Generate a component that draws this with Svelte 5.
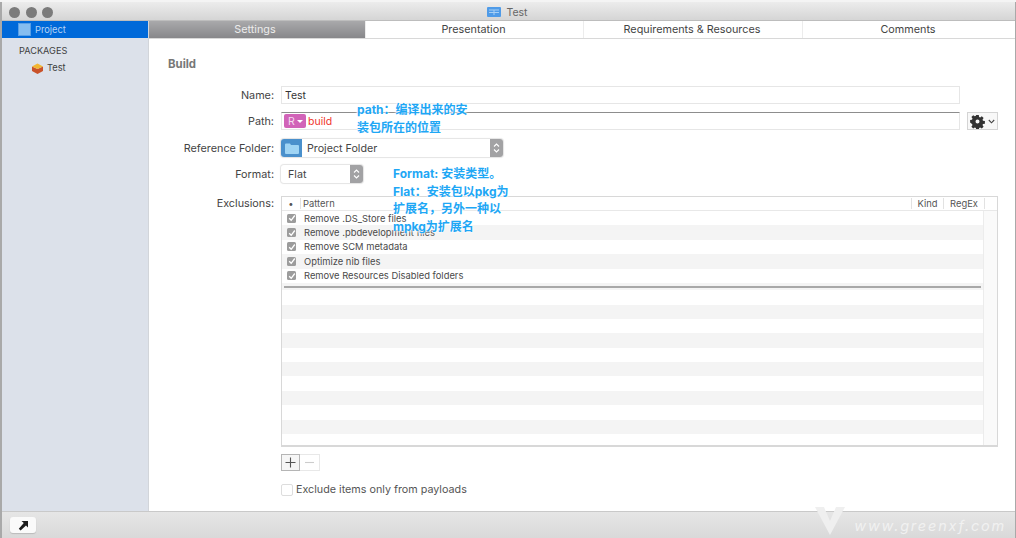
<script>
	const tabs = ['Settings', 'Presentation', 'Requirements & Resources', 'Comments'];
	const rules = [
		'Remove .DS_Store files',
		'Remove .pbdevelopment files',
		'Remove SCM metadata',
		'Optimize nib files',
		'Remove Resources Disabled folders'
	];
	const emptyRows = Array(11).fill(0);
</script>

<div class="window">
	<header class="titlebar">
		<div class="lights"><i></i><i></i><i></i></div>
		<div class="title">
			<svg width="14" height="10" viewBox="0 0 14 10"><rect width="14" height="10" rx="1" fill="#4f9be8" /><path d="M2 3h10M2 5.5h10M7 3v5" stroke="#a8d0f5" stroke-width="1" /></svg>
			<span>Test</span>
		</div>
	</header>

	<div class="body">
		<aside class="sidebar">
			<div class="project">
				<span class="project-icon"></span>
				<span>Project</span>
			</div>
			<div class="group-label">PACKAGES</div>
			<div class="package">
				<svg width="13" height="12" viewBox="0 0 13 12">
					<path d="M1 4.5 6.5 7 12 4.5V9l-5.5 3L1 9z" fill="#c9522a" />
					<path d="M1 4.5 6.5 1.5 12 4.5 6.5 7z" fill="#f2b632" />
				</svg>
				<span>Test</span>
			</div>
		</aside>

		<main class="content">
			<nav class="tabs">
				{#each tabs as tab, i}
					<div class="tab" class:active={i === 0}>{tab}</div>
				{/each}
			</nav>

			<div class="pane">
				<h2>Build</h2>
				<div class="form">
					<label for="name">Name:</label>
					<input id="name" class="field" value="Test" />

					<span class="label">Path:</span>
					<div class="path-row">
						<div class="field path-field">
							<span class="badge">R<b></b></span>
							<span class="path-text">build</span>
						</div>
						<div class="gear-btn">
							<svg width="15" height="15" viewBox="0 0 15 15">
								<path fill="#333" fill-rule="evenodd" d="M6.2 1h2.6l.3 1.9 1.1.5 1.6-1.1 1.8 1.8-1.1 1.6.5 1.1 1.9.3v2.6l-1.9.3-.5 1.1 1.1 1.6-1.8 1.8-1.6-1.1-1.1.5-.3 1.9H6.2l-.3-1.9-1.1-.5-1.6 1.1-1.8-1.8 1.1-1.6-.5-1.1L.1 8.6V6l1.9-.3.5-1.1-1.1-1.6 1.8-1.8 1.6 1.1 1.1-.5zM7.5 5.4a2 2 0 1 0 0 4 2 2 0 0 0 0-4z" />
							</svg>
							<svg width="7" height="5" viewBox="0 0 7 5"><path d="M.8 1 3.5 3.8 6.2 1" fill="none" stroke="#444" stroke-width="1.1" /></svg>
						</div>
					</div>

					<span class="label">Reference Folder:</span>
					<div class="select ref-select">
						<span class="folder-cell">
							<svg width="14" height="11" viewBox="0 0 14 11"><path d="M0 1.5A1 1 0 0 1 1 .5h4l1 1.5h7a1 1 0 0 1 1 1V10a1 1 0 0 1-1 1H1a1 1 0 0 1-1-1z" fill="#9fd4f4" /></svg>
						</span>
						<span class="select-text">Project Folder</span>
						<span class="stepper"><svg width="7" height="12" viewBox="0 0 7 12"><path d="M1 4.5 3.5 2 6 4.5M1 7.5 3.5 10 6 7.5" fill="none" stroke="#fff" stroke-width="1.1" /></svg></span>
					</div>

					<span class="label">Format:</span>
					<div class="select format-select">
						<span class="select-text">Flat</span>
						<span class="stepper"><svg width="7" height="12" viewBox="0 0 7 12"><path d="M1 4.5 3.5 2 6 4.5M1 7.5 3.5 10 6 7.5" fill="none" stroke="#fff" stroke-width="1.1" /></svg></span>
					</div>

					<span class="label exclusions-label">Exclusions:</span>
					<div class="exclusions">
						<div class="table">
							<div class="thead">
								<span class="col-dot">•</span>
								<span class="col-pattern">Pattern</span>
								<span class="col-kind">Kind</span>
								<span class="col-regex">RegEx</span>
							</div>
							<div class="table-body">
								<div class="table-main">
									{#each rules as rule}
										<div class="row">
											<span class="check">
												<svg width="8" height="8" viewBox="0 0 8 8"><path d="M1.2 4.2 3.2 6.3 6.8 1.5" fill="none" stroke="#fff" stroke-width="1.3" /></svg>
											</span>
											<span>{rule}</span>
										</div>
									{/each}
									<div class="row divider-row"><span class="divider"></span></div>
									{#each emptyRows as _}
										<div class="row"></div>
									{/each}
								</div>
								<div class="scroll-gutter"></div>
							</div>
						</div>

						<div class="add-remove">
							<span class="plus">
								<svg width="11" height="11" viewBox="0 0 11 11"><path d="M5.5 .5v10M.5 5.5h10" stroke="#555" stroke-width="1.1" /></svg>
							</span>
							<span class="minus">
								<svg width="11" height="11" viewBox="0 0 11 11"><path d="M1 5.5h9" stroke="#ccc" stroke-width="1.1" /></svg>
							</span>
						</div>

						<div class="payloads">
							<span class="box"></span>
							<span>Exclude items only from payloads</span>
						</div>
					</div>
				</div>
			</div>
		</main>
	</div>

	<footer class="footer">
		<div class="arrow-btn">
			<svg width="11" height="11" viewBox="0 0 11 11"><path d="M3.5 1H10v6.5L8 5.6 2.6 10.6 .8 8.7 5.8 3.1z" fill="#1c1c1c" /></svg>
		</div>
		<div class="watermark">
			<svg width="34" height="28" viewBox="0 0 34 28"><path d="M2 0h9l6 14 6-14h9L17 28z" fill="#efefef" /></svg>
			<span>www.greenxf.com</span>
		</div>
	</footer>

	<div class="note note-path">path：编译出来的安<br />装包所在的位置</div>
	<div class="note note-format">Format: 安装类型。<br />Flat：安装包以pkg为<br />扩展名，另外一种以<br />mpkg为扩展名</div>
</div>

<style>
	:global(body) {
		margin: 0;
		background: #fff;
	}

	.window {
		position: relative;
		width: 1016px;
		height: 538px;
		box-sizing: border-box;
		padding: 2px 1px 0 2px;
		background: #a9a9a9;
		display: flex;
		flex-direction: column;
		overflow: hidden;
		font-family: Inter, "Noto Sans", "Noto Sans CJK SC", sans-serif;
		font-size: 10px;
		color: #4a4a4a;
		box-shadow: inset 0 2px 0 #f4f4f4;
	}

	.titlebar {
		position: relative;
		height: 19px;
		flex: none;
		display: flex;
		align-items: center;
		justify-content: center;
		padding: 2px 2px 0 0;
		background: linear-gradient(#ececec, #d5d5d5);
		border-bottom: 1px solid #bdbdbd;
		box-sizing: border-box;
	}

	.lights {
		position: absolute;
		left: 7px;
		top: 5px;
		display: flex;
		gap: 5.5px;
	}

	.lights i {
		width: 11px;
		height: 11px;
		border-radius: 50%;
		background: #7b7b7b;
	}

	.title {
		display: flex;
		align-items: center;
		gap: 5px;
		font-size: 10.5px;
		color: #666;
	}

	.body {
		flex: 1;
		display: flex;
		min-height: 0;
	}

	.sidebar {
		width: 147px;
		flex: none;
		background: #dce1ea;
		border-right: 1px solid #d2d5da;
		box-sizing: border-box;
		color: #3f3f3f;
		font-size: 9.3px;
	}

	.project {
		height: 17px;
		background: #0069d9;
		color: #b5d3f5;
		display: flex;
		align-items: center;
		gap: 4px;
		padding-left: 16px;
	}

	.project-icon {
		width: 11px;
		height: 11px;
		background: #85bdf0;
		border: 1px solid #5a9fe6;
	}

	.group-label {
		margin: 7px 0 0 17px;
		line-height: 12px;
		font-size: 9.2px;
	}

	.package {
		display: flex;
		align-items: center;
		gap: 3px;
		margin: 4px 0 0 29px;
		height: 13px;
	}

	.content {
		flex: 1;
		min-width: 0;
		background: #fff;
		display: flex;
		flex-direction: column;
	}

	.tabs {
		height: 18px;
		flex: none;
		display: grid;
		grid-template-columns: 216px 218px 219px 1fr;
		border-bottom: 1px solid #d8d8d8;
		box-sizing: border-box;
	}

	.tab {
		display: flex;
		align-items: center;
		justify-content: center;
		padding-right: 2px;
		font-size: 10.8px;
		color: #444;
		border-left: 1px solid #ececec;
	}

	.tab.active {
		background: linear-gradient(#a9a9ab, #87878a);
		color: #ececec;
		border-left: none;
		padding-right: 4px;
	}

	.pane {
		flex: 1;
		padding: 0 17px 0 19px;
		min-height: 0;
	}

	h2 {
		margin: 18px 0 0;
		font-size: 11.4px;
		line-height: 14px;
		font-weight: 700;
		color: #777;
	}

	.form {
		display: grid;
		grid-template-columns: 107px 1fr;
		column-gap: 6px;
		margin-top: 15px;
		align-items: center;
		font-size: 10.7px;
	}

	.form > label,
	.label {
		text-align: right;
		color: #444;
		padding-right: 1px;
		font-size: 10.8px;
	}

	.field {
		box-sizing: border-box;
		height: 18px;
		width: 679px;
		margin: 0;
		padding: 0 3px;
		border: 1px solid #e6e6e6;
		background: #fff;
		font: inherit;
		font-size: 10.5px;
		color: #333;
		outline: none;
	}

	.path-row {
		display: flex;
		align-items: center;
		gap: 7px;
		margin-top: 8px;
	}

	.form > .label:nth-of-type(1) {
		margin-top: 8px;
	}

	.path-field {
		display: flex;
		align-items: center;
		gap: 2px;
		padding: 0 2px;
		border-top: 1px solid #8d8d8d;
	}

	.badge {
		height: 14px;
		width: 22px;
		box-sizing: border-box;
		padding-left: 4px;
		background: #d163b8;
		color: #f4dcef;
		border-radius: 2px;
		display: flex;
		align-items: center;
		gap: 2px;
	}

	.badge b {
		border: 3px solid transparent;
		border-top-color: #fff;
		border-bottom: none;
	}

	.path-text {
		color: #f0352c;
	}

	.gear-btn {
		width: 31px;
		height: 18px;
		box-sizing: border-box;
		border: 1px solid #d4d4d4;
		background: #f8f8f8;
		display: flex;
		align-items: center;
		justify-content: center;
		gap: 3px;
	}

	.select {
		height: 18px;
		display: flex;
		align-items: center;
		box-sizing: border-box;
		border-radius: 3px;
		background: #fff;
		box-shadow: 0 0 1px 1px #e4e4e4;
		overflow: hidden;
	}

	.ref-select {
		width: 222px;
		margin-top: 9px;
	}

	.format-select {
		width: 82px;
		margin-top: 8px;
	}

	.form > .label:nth-of-type(2) {
		margin-top: 9px;
	}

	.form > .label:nth-of-type(3) {
		margin-top: 8px;
	}

	.folder-cell {
		width: 21px;
		height: 100%;
		background: #4a90cc;
		display: flex;
		align-items: center;
		justify-content: center;
		margin-right: 5px;
	}

	.format-select .select-text {
		padding-left: 7px;
	}

	.select-text {
		flex: 1;
		color: #444;
	}

	.stepper {
		width: 13px;
		height: 100%;
		background: #a2a2a4;
		display: flex;
		align-items: center;
		justify-content: center;
	}

	.exclusions-label {
		align-self: start;
		margin-top: 14px;
		line-height: 14px;
	}

	.exclusions {
		margin-top: 13px;
	}

	.table {
		width: 717px;
		height: 251px;
		box-sizing: border-box;
		border: 1px solid #d8d8d8;
		border-bottom-width: 2px;
		display: flex;
		flex-direction: column;
		overflow: hidden;
	}

	.thead {
		height: 14px;
		flex: none;
		display: flex;
		align-items: center;
		font-size: 9.4px;
		color: #555;
		box-sizing: border-box;
		border-bottom: 1px solid #e8e8e8;
	}

	.thead span {
		box-sizing: border-box;
		border-right: 1px solid #e2e2e2;
		height: 11px;
		line-height: 11px;
	}

	.col-dot {
		width: 19px;
		text-align: center;
	}

	.col-pattern {
		width: 611px;
		padding-left: 2px;
	}

	.col-kind {
		width: 32px;
		text-align: center;
	}

	.col-regex {
		width: 41px;
		text-align: center;
	}

	.table-body {
		flex: 1;
		min-height: 0;
		display: flex;
	}

	.table-main {
		flex: 1;
		min-width: 0;
		font-size: 9.4px;
	}

	.row {
		height: 14.4px;
		display: flex;
		align-items: center;
		gap: 8px;
		padding-left: 5px;
		color: #4a4a4a;
	}

	.row:nth-of-type(even) {
		background: #f4f4f4;
	}

	.check {
		width: 9px;
		height: 9px;
		border-radius: 1.5px;
		background: #9c9c9c;
		display: flex;
		align-items: center;
		justify-content: center;
	}

	.row.divider-row {
		height: 7.2px;
		padding: 0 2px;
		background: #f4f4f4;
	}

	.divider {
		flex: 1;
		height: 2px;
		background: #a8a8a8;
	}

	.scroll-gutter {
		width: 13px;
		flex: none;
		background: #fafafa;
		border-left: 1px solid #ececec;
	}

	.add-remove {
		display: flex;
		margin-top: 7px;
	}

	.plus,
	.minus {
		width: 19px;
		height: 17px;
		box-sizing: border-box;
		display: flex;
		align-items: center;
		justify-content: center;
	}

	.plus {
		border: 1px solid #b5b5b5;
		background: #f6f6f6;
	}

	.minus {
		width: 20px;
		border: 1px solid #e8e8e8;
		border-left: none;
	}

	.payloads {
		display: flex;
		align-items: center;
		gap: 3px;
		margin-top: 12px;
		font-size: 10.75px;
		color: #555;
	}

	.box {
		width: 12px;
		height: 12px;
		box-sizing: border-box;
		border: 1px solid #ddd;
		border-radius: 2px;
	}

	.footer {
		position: relative;
		height: 27px;
		flex: none;
		background: linear-gradient(#e6e6e6, #d9d9d9);
		border-top: 1px solid #c9c9c9;
		box-sizing: border-box;
		display: flex;
		align-items: center;
		padding-left: 8px;
	}

	.arrow-btn {
		width: 26px;
		height: 16px;
		background: #fafafa;
		border-radius: 3px;
		box-shadow: 0 1px 1px #bbb;
		display: flex;
		align-items: center;
		justify-content: center;
	}

	.watermark {
		position: absolute;
		right: 9px;
		bottom: 0;
		display: flex;
		align-items: center;
		gap: 7px;
		height: 34px;
		color: #f1f1f1;
		font-style: italic;
		font-size: 14.5px;
		letter-spacing: 1.8px;
	}

	.watermark span {
		margin-top: 8px;
	}

	.note {
		position: absolute;
		font-weight: 700;
		font-size: 12px;
		line-height: 17.5px;
		color: #1ea7f5;
		text-shadow: 0 0 2px #fff, 0 0 2px #fff, 0 0 3px #fff;
		white-space: nowrap;
	}

	.note-path {
		left: 357px;
		top: 101px;
	}

	.note-format {
		left: 393px;
		top: 165px;
	}
</style>
